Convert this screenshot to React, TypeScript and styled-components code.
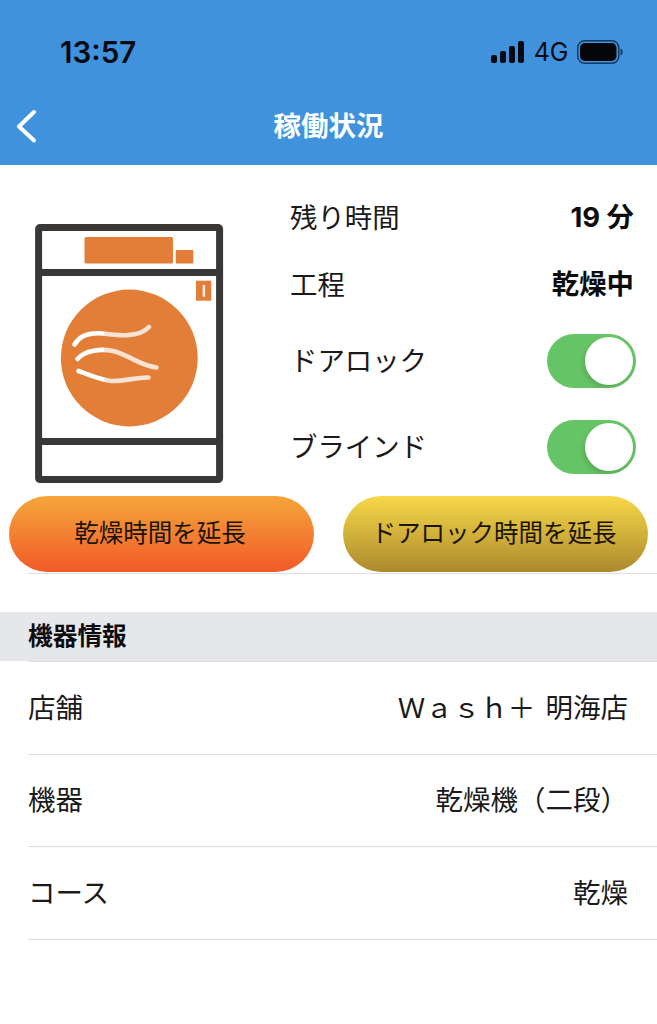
import React from "react";
import styled, { createGlobalStyle } from "styled-components";

const Global = createGlobalStyle`
  html, body { margin: 0; padding: 0; background: #fff; }
  body { font-family: "Noto Sans CJK JP", "Noto Sans", sans-serif; color: #111; }
`;

const Page = styled.div`
  width: 657px;
  height: 1024px;
  overflow: hidden;
  background: #fff;
`;
const Header = styled.header`
  background: #4192dc;
  height: 165px;
  display: flex;
  flex-direction: column;
`;
const StatusBar = styled.div`
  height: 104px;
  padding: 0 34px 0 60px;
  display: flex;
  align-items: center;
  justify-content: space-between;
  color: #050a12;
`;
const Clock = styled.span`
  font-family: Inter, sans-serif;
  font-weight: 600;
  font-size: 29.5px;
`;
const StatusIcons = styled.div`
  display: flex;
  align-items: center;
  gap: 9px;
`;
const Network = styled.span`
  font-family: Inter, sans-serif;
  font-size: 25px;
  font-weight: 400;
  line-height: 1;
  letter-spacing: -0.3px;
`;
const Nav = styled.div`
  height: 44px;
  display: grid;
  grid-template-columns: 1fr auto 1fr;
  align-items: center;
  padding-left: 15px;
`;
const Back = styled.svg`
  display: block;
`;
const Title = styled.h1`
  margin: 0 0 2px -15px;
  font-size: 27.5px;
  font-weight: 700;
  color: #fff;
  line-height: 1;
`;
const Panel = styled.section`
  display: flex;
  padding-top: 19px;
  height: 331px;
  box-sizing: border-box;
`;
const MachineColumn = styled.div`
  width: 291px;
  flex: none;
  padding: 40px 0 0 35px;
  box-sizing: border-box;
`;
const Machine = styled.svg`
  display: block;
`;
const StatusList = styled.div`
  flex: 1;
  padding-right: 21px;
`;
const StatusRow = styled.div<{ $h: number }>`
  height: ${(p) => p.$h}px;
  display: flex;
  align-items: center;
  justify-content: space-between;
`;
const Label = styled.span`
  font-size: 27.4px;
  line-height: 1;
  color: #1a1a1a;
  margin: 0 0 2px -1px;
`;
const Strong = styled.span`
  font-family: Inter, "Noto Sans CJK JP", sans-serif;
  font-size: 27.4px;
  font-weight: 700;
  line-height: 1;
  margin-right: 2px;
  color: #0c0c0c;
`;
const Track = styled.div`
  width: 89px;
  height: 54px;
  border-radius: 27px;
  background: #65c466;
  display: flex;
  justify-content: flex-end;
  align-items: center;
  padding-right: 3px;
  box-sizing: border-box;
`;
const Thumb = styled.div`
  width: 48px;
  height: 48px;
  border-radius: 50%;
  background: #fff;
  box-shadow: -2px 3px 5px rgba(0, 0, 0, 0.12);
`;
const Actions = styled.div`
  display: grid;
  grid-template-columns: 305px 305px;
  gap: 29px;
  padding-left: 9px;
  height: 76px;
`;
const ActionButton = styled.button<{ $from: string; $to: string }>`
  border: 0;
  padding: 0 3px 3px 0;
  border-radius: 38px;
  background: linear-gradient(180deg, ${(p) => p.$from}, ${(p) => p.$to});
  font-family: inherit;
  font-size: 24.5px;
  color: #1b1408;
  line-height: 1;
`;
const Divider = styled.div<{ $mt?: number }>`
  height: 1px;
  background: #dfdfe2;
  margin: ${(p) => p.$mt ?? 0}px 0 0 28px;
`;
const SectionHead = styled.div`
  margin-top: 38px;
  height: 44px;
  padding: 0 0 5px 28px;
  background: #e6e7eb;
  display: flex;
  align-items: center;
  font-size: 24.7px;
  font-weight: 700;
  color: #0d0d0d;
`;
const InfoRow = styled.div`
  height: 87.6px;
  margin-left: 28px;
  padding: 0 29px 4px 0;
  border-bottom: 1px solid #dcdcdf;
  box-sizing: content-box;
  display: flex;
  align-items: center;
  justify-content: space-between;
  font-size: 27.5px;
  word-spacing: 4px;
  color: #1a1a1a;
`;

const Toggle = () => (
  <Track>
    <Thumb />
  </Track>
);

const infos: [string, string][] = [
  ["店舗", "Ｗａｓｈ＋ 明海店"],
  ["機器", "乾燥機（二段）"],
  ["コース", "乾燥"],
];

export default function App() {
  return (
    <Page>
      <Global />
      <Header>
        <StatusBar>
          <Clock>13:57</Clock>
          <StatusIcons>
            <svg width="34" height="22" viewBox="0 0 34 22" fill="#050a12">
              <rect x="0" y="14" width="6" height="8" rx="2" />
              <rect x="9" y="10" width="6" height="12" rx="2" />
              <rect x="18" y="5" width="6" height="17" rx="2" />
              <rect x="27" y="0" width="6" height="22" rx="2" />
            </svg>
            <Network>4G</Network>
            <svg width="46" height="24" viewBox="0 0 46 24">
              <rect x="0.75" y="0.75" width="41" height="22.5" rx="7" fill="none" stroke="#17395f" strokeWidth="1.5" />
              <rect x="3" y="3" width="36.5" height="18" rx="5" fill="#040608" />
              <path d="M43.5 8.5c1.6.5 2.2 2 2.2 3.5s-.6 3-2.2 3.5z" fill="#17395f" />
            </svg>
          </StatusIcons>
        </StatusBar>
        <Nav>
          <Back width="22" height="34" viewBox="0 0 22 34" fill="none">
            <path d="M19 3 4 17.5 19 31.5" stroke="#fff" strokeWidth="4" strokeLinecap="round" strokeLinejoin="round" />
          </Back>
          <Title>稼働状況</Title>
        </Nav>
      </Header>
      <Panel>
        <MachineColumn>
          <Machine width="189" height="260" viewBox="0 0 189 260">
            <defs>
              <linearGradient id="air" gradientUnits="userSpaceOnUse" x1="39" y1="0" x2="122" y2="0">
                <stop offset="0.36" stopColor="#ffffff" />
                <stop offset="0.37" stopColor="#f6e3d3" />
                <stop offset="1" stopColor="#f6e3d3" />
              </linearGradient>
            </defs>
            <rect x="3.6" y="3.6" width="181" height="252" rx="1.5" fill="#fff" stroke="#3a3837" strokeWidth="7" strokeLinejoin="round" />
            <rect x="3" y="45" width="182" height="7" fill="#3a3837" />
            <rect x="3" y="214" width="182" height="7" fill="#3a3837" />
            <rect x="49.5" y="13" width="88.5" height="26.5" rx="1.5" fill="#e27e37" />
            <rect x="140.7" y="26" width="17.6" height="13.4" rx="1" fill="#e27e37" />
            <rect x="161" y="56.7" width="15.3" height="20" fill="#e27e37" />
            <rect x="167.6" y="61" width="2.5" height="11.7" fill="#fbeee3" />
            <circle cx="94.3" cy="134" r="68.4" fill="#e27e37" />
            <g fill="none" stroke="url(#air)" strokeWidth="4.6" strokeLinecap="round">
              <path d="M39.5 120.5C46 109 58 108.5 68 109.5C82 111.5 104 114 114 103" />
              <path d="M42.5 135C50 126 66 124.5 78 127C93 130.5 106 142 121.5 143.5" />
              <path d="M43.5 147C54 151 66 156 76 157C90 157.5 102 153 113.5 153.5" />
            </g>
          </Machine>
        </MachineColumn>
        <StatusList>
          <StatusRow $h={68}>
            <Label>残り時間</Label>
            <Strong>19 分</Strong>
          </StatusRow>
          <StatusRow $h={66}>
            <Label>工程</Label>
            <Strong>乾燥中</Strong>
          </StatusRow>
          <StatusRow $h={86}>
            <Label>ドアロック</Label>
            <Toggle />
          </StatusRow>
          <StatusRow $h={86}>
            <Label>ブラインド</Label>
            <Toggle />
          </StatusRow>
        </StatusList>
      </Panel>
      <Actions>
        <ActionButton $from="#f5a63b" $to="#f15a27">乾燥時間を延長</ActionButton>
        <ActionButton $from="#f8d848" $to="#ab892d">ドアロック時間を延長</ActionButton>
      </Actions>
      <Divider $mt={1} />
      <SectionHead>機器情報</SectionHead>
      <Divider />
      {infos.map(([k, v]) => (
        <InfoRow key={k}>
          <span>{k}</span>
          <span>{v}</span>
        </InfoRow>
      ))}
    </Page>
  );
}
